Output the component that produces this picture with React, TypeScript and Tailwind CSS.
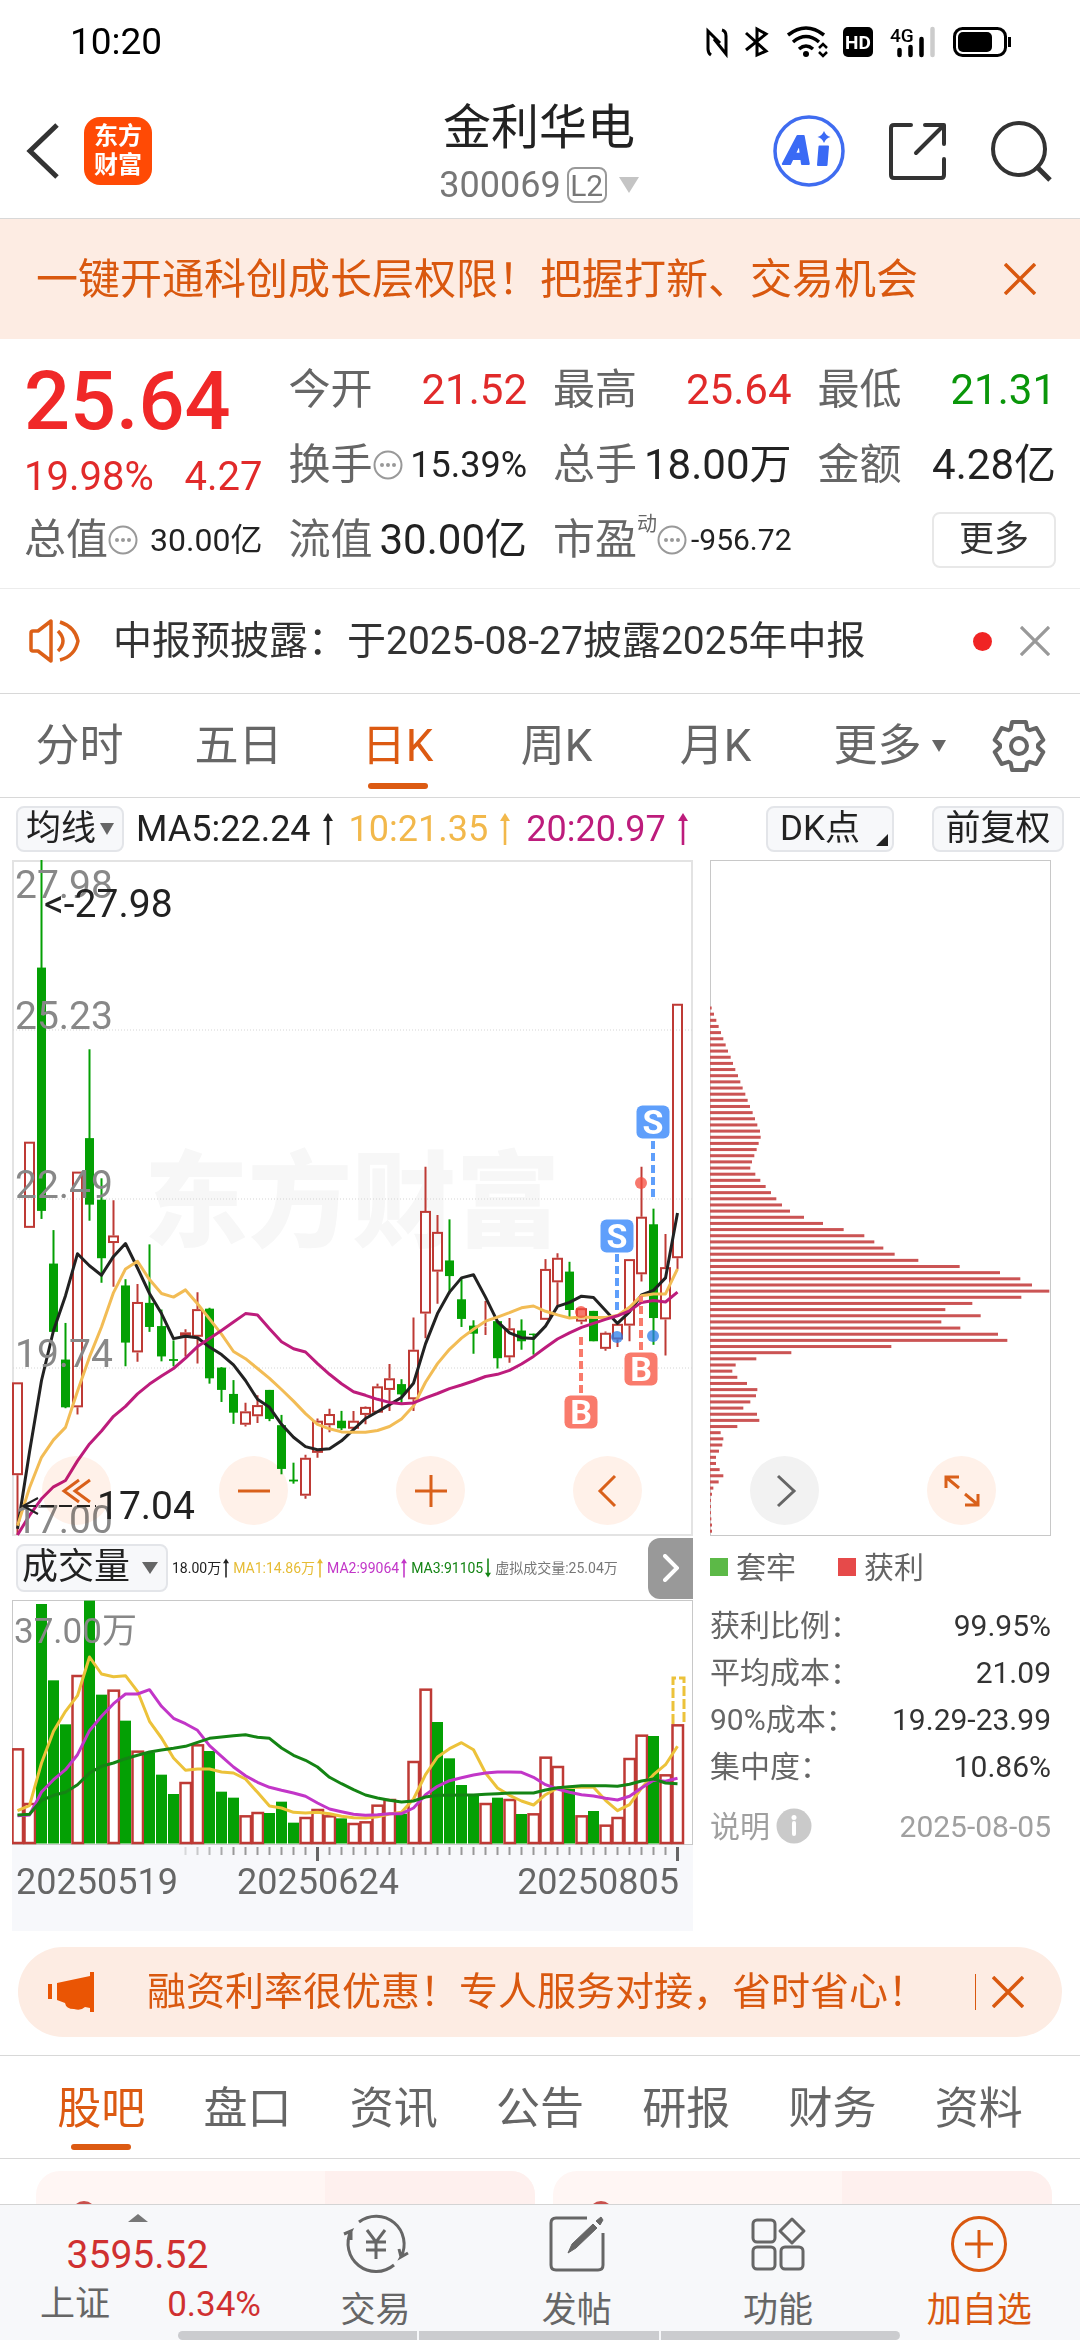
import React, { useState } from 'react';

interface Candle {
  up: boolean;
  // high, body top, body bottom, low (chart units, 0 = top)
  v: [number, number, number, number];
}

interface QuoteItem {
  label: string;
  value: string;
  tone?: 'up' | 'down';
  size?: 'sm' | 'md' | 'lg' | 'xs';
  more?: boolean;
  sup?: string;
}

const raw: [number, number, number, number, number][] = [
  [1, 1194, 1194, 1402, 1536], [1, 655, 655, 848, 848], [0, 24, 265, 810, 828], [0, 853, 928, 1081, 1081],
  [0, 1061, 1143, 1250, 1252], [1, 722, 722, 1250, 1266], [0, 448, 647, 796, 832], [0, 737, 785, 916, 971],
  [1, 786, 865, 882, 980], [0, 963, 977, 1105, 1158], [1, 974, 1014, 1127, 1148], [0, 885, 1016, 1070, 1081],
  [0, 1031, 1068, 1136, 1147], [0, 1100, 1142, 1146, 1158], [1, 1075, 1082, 1090, 1136], [1, 992, 1030, 1092, 1152],
  [0, 1027, 1029, 1185, 1197], [0, 1160, 1161, 1211, 1238], [0, 1189, 1220, 1262, 1287], [1, 1240, 1259, 1289, 1293],
  [1, 1223, 1245, 1270, 1285], [0, 1211, 1211, 1276, 1281], [0, 1267, 1290, 1388, 1400], [0, 1374, 1412, 1416, 1421],
  [1, 1356, 1363, 1448, 1455], [1, 1275, 1280, 1352, 1363], [1, 1253, 1265, 1290, 1306], [0, 1258, 1280, 1297, 1301],
  [1, 1258, 1280, 1298, 1301], [1, 1248, 1249, 1267, 1288], [1, 1197, 1203, 1262, 1262], [1, 1153, 1185, 1211, 1258],
  [0, 1187, 1198, 1221, 1240], [1, 1049, 1121, 1232, 1258], [1, 711, 810, 1040, 1095], [1, 819, 857, 946, 1018],
  [0, 829, 921, 956, 995], [0, 962, 1008, 1052, 1070], [0, 1055, 1067, 1085, 1130], [1, 1012, 1069, 1070, 1088],
  [0, 1055, 1057, 1140, 1163], [1, 1050, 1073, 1138, 1150], [0, 1053, 1078, 1102, 1121], [0, 1085, 1085, 1088, 1132],
  [1, 918, 940, 1054, 1054], [1, 905, 915, 970, 1025], [0, 924, 946, 1032, 1048], [1, 1028, 1028, 1058, 1064],
  [0, 1034, 1034, 1102, 1102], [1, 1080, 1083, 1119, 1123], [1, 1063, 1063, 1098, 1115], [1, 918, 918, 1067, 1102],
  [1, 711, 823, 952, 968], [0, 805, 840, 1050, 1110], [1, 862, 936, 1053, 1134], [1, 346, 346, 916, 940]
];

const candles: Candle[] = raw.map(([up, ...v]) => ({ up: up === 1, v }));

const ma5 = [
  1522, 1350, 1190, 1078, 1000, 906, 933, 954, 912, 883, 938, 995, 1040, 1096, 1091, 1094, 1115, 1132, 1155, 1190,
  1232, 1250, 1288, 1317, 1338, 1345, 1343, 1325, 1300, 1275, 1260, 1244, 1228, 1196, 1108, 1040, 992, 960, 953, 1003,
  1058, 1083, 1094, 1096, 1068, 1024, 1015, 1001, 1004, 1033, 1062, 1036, 998, 988, 960, 815
];
const ma10 = [
  1515, 1430, 1362, 1323, 1295, 1214, 1137, 1070, 993, 940, 923, 964, 995, 1003, 987, 1018, 1052, 1086, 1125, 1141,
  1163, 1185, 1210, 1236, 1264, 1288, 1298, 1305, 1306, 1306, 1302, 1293, 1276, 1247, 1194, 1152, 1120, 1095, 1075, 1057,
  1048, 1038, 1027, 1023, 1035, 1043, 1050, 1048, 1049, 1049, 1044, 1026, 1000, 996, 996, 940
];
const ma20 = [
  1536, 1492, 1455, 1428, 1414, 1370, 1332, 1303, 1270, 1248, 1220, 1198, 1180, 1163, 1140, 1114, 1096, 1078, 1059, 1040,
  1043, 1074, 1103, 1119, 1126, 1152, 1176, 1197, 1215, 1223, 1232, 1239, 1242, 1240, 1229, 1219, 1208, 1200, 1191, 1181,
  1176, 1167, 1153, 1136, 1116, 1097, 1083, 1071, 1062, 1053, 1045, 1034, 1015, 1011, 1014, 992
];

const volumes = [
  656, 820, 223, 452, 584, 436, 213, 495, 480, 573, 663, 668, 735, 793, 757, 644, 664, 786, 804, 857, 847, 850, 816, 879,
  862, 838, 857, 866, 880, 875, 825, 808, 852, 694, 477, 577, 686, 766, 795, 820, 804, 808, 853, 851, 681, 709, 778, 857,
  844, 885, 862, 685, 615, 619, 734, 584
];
const volMa1 = [
  843, 828, 700, 605, 545, 498, 382, 433, 441, 438, 485, 575, 625, 685, 722, 718, 718, 727, 730, 748, 788, 829, 835, 848,
  850, 848, 852, 860, 864, 865, 861, 853, 848, 808, 735, 682, 657, 639, 660, 730, 775, 797, 814, 826, 795, 775, 773, 772,
  773, 812, 843, 825, 775, 735, 705, 650
];
const volMa2 = [
  858, 856, 787, 750, 720, 675, 603, 560, 522, 493, 493, 480, 530, 566, 582, 602, 648, 680, 712, 738, 758, 773, 782, 790,
  800, 820, 838, 846, 854, 857, 855, 852, 852, 835, 795, 770, 753, 744, 736, 730, 727, 727, 728, 743, 765, 778, 788, 795,
  799, 806, 811, 800, 775, 752, 755, 746
];
const volMa3 = [
  856, 854, 812, 797, 788, 765, 730, 710, 700, 687, 677, 667, 661, 656, 650, 638, 626, 622, 618, 615, 623, 626, 655, 677,
  692, 712, 743, 762, 780, 796, 805, 812, 817, 814, 802, 797, 797, 796, 796, 794, 792, 790, 790, 790, 781, 774, 771, 768,
  768, 768, 770, 764, 754, 748, 760, 762
];

// chip distribution, length of each bar from the top price down
const chips = [
  5, 12, 19, 26, 33, 40, 47, 54, 62, 69, 76, 84, 91, 98, 106, 113, 120, 128, 135, 142, 150, 152, 146, 140, 133, 126, 121,
  136, 151, 167, 183, 199, 216, 240, 282, 339, 401, 463, 493, 520, 554, 625, 749, 870, 931, 966, 1018, 934, 787, 706, 812,
  694, 751, 864, 892, 544, 244, 139, 77, 67, 82, 111, 142, 138, 121, 100, 141, 148, 82, 32, 40, 37, 27, 18, 18, 29, 40, 26,
  10, 6, 3, 3, 3, 4, 6, 6
];

const RED = '#be3a35';
const GREEN = '#04a004';

const cx = (i: number) => 5.5 + i * 12;
const priceY = (v: number) => (v - 24) / 2.24;
const volY = (v: number) => (v - 211) / 3;
const line = (data: number[], toY: (v: number) => number) =>
  data.map((v, i) => `${cx(i)},${toY(v).toFixed(1)}`).join(' ');

const gearPoints = Array.from({ length: 6 }, (_, i) => i * 60 - 90)
  .flatMap((a) => [[a - 26, 19], [a - 16, 25], [a + 16, 25], [a + 26, 19]])
  .map(([a, r]) => {
    const t = (a * Math.PI) / 180;
    return `${(27 + r * Math.cos(t)).toFixed(1)},${(27 + r * Math.sin(t)).toFixed(1)}`;
  })
  .join(' ');

const CloseIcon = ({ className }: { className: string }) => (
  <svg className={className} viewBox="0 0 32 32" fill="none" stroke="currentColor" strokeWidth="3.500">
    <path d="M1 1L31 31M31 1L1 31" />
  </svg>
);

const Caret = ({ className }: { className: string }) => (
  <svg className={className} viewBox="0 0 14 12" preserveAspectRatio="none" fill="currentColor">
    <path d="M0 0H14L7 12Z" />
  </svg>
);

const Arrow = ({ className }: { className: string }) => (
  <svg className={className} viewBox="0 0 10 32" fill="currentColor">
    <path d="M5 0L10 8H6.300V32H3.700V8H0Z" />
  </svg>
);

const StatusBar: React.FC = () => (
  <div className="flex h-[84px] items-center justify-between pl-[70px] pr-[68px]">
    <span className="text-[37px] text-black">10:20</span>
    <svg className="h-[34px] w-[308px]" viewBox="704 25 308 34" fill="none" stroke="#000">
      <path d="M711 55Q708 53 708 49V31L720 43M714 39L726 54V36Q726 31 722 30" strokeWidth="3" />
      <path d="M746 33L766 51L757 55V29L766 34L746 50" strokeWidth="3" />
      <path d="M788 35Q806 21 824 35M793 42Q806 31 819 42M799 49Q806 43 813 49" strokeWidth="3.500" />
      <circle cx="806" cy="54" r="3" fill="#000" stroke="none" />
      <path d="M819 48L823 44L827 48M819 52L823 56L827 52" strokeWidth="2.500" />
      <rect x="843" y="27" width="30" height="30" rx="5" fill="#000" stroke="none" />
      <text x="858" y="49" textAnchor="middle" fontSize="19" fontWeight="700" fill="#fff" stroke="none">HD</text>
      <text x="890" y="42" fontSize="19" fontWeight="500" fill="#000" stroke="none">4G</text>
      <g strokeWidth="4.500" strokeLinecap="round">
        <path d="M899.500 50V55M910.500 47V55M921.500 39V55" />
        <path d="M932.500 29V55" stroke="#ccc" />
      </g>
      <rect x="954.500" y="28.500" width="51" height="27" rx="8" strokeWidth="3" />
      <rect x="958" y="32" width="34" height="20" rx="5" fill="#000" stroke="none" />
      <path d="M1009.500 37V47" strokeWidth="3" />
    </svg>
  </div>
);

const Header: React.FC = () => (
  <header className="flex h-[135px] items-center border-b border-[#d8d8d8] pl-[26px] pr-[28px]">
    <div className="flex flex-1 items-center gap-6">
      <button aria-label="返回">
        <svg className="h-[56px] w-[34px]" viewBox="0 0 34 56" fill="none" stroke="#333" strokeWidth="5">
          <path d="M31 2L4 28L31 54" />
        </svg>
      </button>
      <a href="#home" className="flex h-[68px] w-[68px] flex-col items-center justify-center rounded-2xl bg-[#ff4a05] text-2xl leading-[29px] font-bold text-white">
        <span>东方</span>
        <span>财富</span>
      </a>
    </div>
    <div className="flex flex-col items-center pt-2">
      <h1 className="text-[48px] leading-[60px] text-[#222]">金利华电</h1>
      <button className="flex h-[54px] items-center text-[36px] text-[#777]">
        300069
        <span className="ml-1.5 flex h-9 w-10 items-center justify-center rounded-lg border-2 border-[#999] text-[30px] text-[#777]">L2</span>
        <Caret className="ml-3 h-4 w-5 text-[#c4c4c4]" />
      </button>
    </div>
    <div className="flex flex-1 items-center justify-end gap-[42px]">
      <button aria-label="AI">
        <svg className="h-[74px] w-[74px]" viewBox="0 0 74 74">
          <circle cx="37" cy="37" r="34" fill="none" stroke="#3f6cf0" strokeWidth="3.500" />
          <text x="13" y="50" fontSize="39" fontWeight="900" fontStyle="italic" fill="#3a6af5" stroke="#3a6af5" strokeWidth="2" strokeLinejoin="round">A</text>
          <path d="M47.500 32.500H56L54.500 51H46Z" fill="#3a6af5" stroke="#3a6af5" strokeWidth="2" strokeLinejoin="round" />
          <path d="M52 17Q54 22 58.500 23Q54 24 52 29Q50 24 45.500 23Q50 22 52 17Z" fill="#3a6af5" />
        </svg>
      </button>
      <button aria-label="分享">
        <svg className="h-[60px] w-[60px]" viewBox="0 0 60 60" fill="none" stroke="#333" strokeWidth="4" strokeLinejoin="round" strokeLinecap="round">
          <path d="M23 4H6Q3 4 3 7V54Q3 57 6 57H53Q56 57 56 54V38" />
          <path d="M37 4H56V23M55 5L28 32" />
        </svg>
      </button>
      <button aria-label="搜索">
        <svg className="h-[62px] w-[62px]" viewBox="0 0 62 62" fill="none" stroke="#333" strokeWidth="4">
          <circle cx="29" cy="29" r="26" />
          <path d="M46 46L60 60" strokeWidth="5" />
        </svg>
      </button>
    </div>
  </header>
);

const quotes: QuoteItem[] = [
  { label: '今开', value: '21.52', tone: 'up' },
  { label: '最高', value: '25.64', tone: 'up' },
  { label: '最低', value: '21.31', tone: 'down' },
  { label: '换手', value: '15.39%', size: 'md', more: true },
  { label: '总手', value: '18.00万' },
  { label: '金额', value: '4.28亿' },
  { label: '总值', value: '30.00亿', size: 'sm', more: true },
  { label: '流值', value: '30.00亿' },
  { label: '市盈', value: '-956.72', size: 'xs', more: true, sup: '动' }
];

const sizes = { lg: 'text-[42px]', md: 'text-[36px]', sm: 'text-[32px]', xs: 'text-[30px]' };
const tones = { up: 'text-[#e12a2a]', down: 'text-[#0a960a]' };

const MoreDots = () => (
  <svg className="h-[30px] w-[30px]" viewBox="0 0 30 30" fill="#999">
    <circle cx="15" cy="15" r="13.500" fill="none" stroke="#999" strokeWidth="2" />
    <circle cx="9" cy="15" r="2" />
    <circle cx="15" cy="15" r="2" />
    <circle cx="21" cy="15" r="2" />
  </svg>
);

const Quote: React.FC = () => (
  <section className="grid auto-rows-[75px] grid-cols-4 gap-x-[26px] border-b border-[#ececec] px-6 pt-[13px] pb-[11px]">
    <div className="row-span-2 text-[#e12a2a]">
      <div className="text-[81px] leading-[100px] font-medium text-[#f02828]">25.64</div>
      <div className="flex justify-between text-[40px] leading-[50px]">
        <span>19.98%</span>
        <span>4.27</span>
      </div>
    </div>
    {quotes.map((q) => (
      <div key={q.label} className="flex items-center justify-between whitespace-nowrap">
        <span className="flex items-center text-[42px] text-[#666]">
          {q.label}
          {q.sup && <sup className="-top-4 self-center text-xl">{q.sup}</sup>}
          {q.more && <MoreDots />}
        </span>
        <span className={`${sizes[q.size ?? 'lg']} ${q.tone ? tones[q.tone] : 'text-[#222]'}`}>{q.value}</span>
      </div>
    ))}
    <div className="flex items-center justify-end">
      <button className="h-[56px] w-[124px] rounded-lg border-2 border-[#e8e8e8] text-[35px] text-[#333]">更多</button>
    </div>
  </section>
);

const Notice: React.FC = () => (
  <section className="flex h-[105px] items-center border-b border-[#d8d8d8] pl-[29px] pr-[30px]">
    <svg className="h-[44px] w-[52px]" viewBox="0 0 52 44" fill="none" stroke="#dc6018" strokeWidth="3.500" strokeLinejoin="round">
      <path d="M2 14Q2 12 4 12H9L22 2V42L9 32H4Q2 32 2 30Z" />
      <path d="M29 12Q39 22 29 32M31 3Q46 8 49 22Q46 37 31 41" />
    </svg>
    <a href="#notice" className="ml-8 flex-1 text-[39px] text-[#333]">中报预披露：于2025-08-27披露2025年中报</a>
    <span className="h-[19px] w-[19px] rounded-full bg-[#f02424]" />
    <button aria-label="关闭公告" className="ml-7">
      <CloseIcon className="h-[30px] w-[30px] text-[#999]" />
    </button>
  </section>
);

const PeriodTabs: React.FC = () => {
  const [active, setActive] = useState('日K');

  return (
    <nav className="flex h-[104px] items-center border-b border-[#d8d8d8] pr-[34px]">
      {['分时', '五日', '日K', '周K', '月K'].map((t) => (
        <button
          key={t}
          onClick={() => setActive(t)}
          className={`relative h-full w-[159px] text-[44px] ${active === t ? 'text-[#dc5a12]' : 'text-[#666]'}`}
        >
          {t}
          {active === t && <span className="absolute bottom-2 left-1/2 h-1.5 w-[60px] -translate-x-1/2 rounded-full bg-[#dc5a12]" />}
        </button>
      ))}
      <button className="flex flex-1 items-center justify-center gap-2.5 pr-2 text-[44px] text-[#666]">
        更多
        <Caret className="h-3 w-3.5" />
      </button>
      <button aria-label="设置">
        <svg className="h-[54px] w-[54px]" viewBox="0 0 54 54" fill="none" stroke="#666" strokeWidth="4" strokeLinejoin="round">
          <polygon points={gearPoints} />
          <circle cx="27" cy="27" r="8" />
        </svg>
      </button>
    </nav>
  );
};

const Toolbar: React.FC = () => (
  <div className="flex h-[62px] items-center px-4 text-[35px] text-[#222]">
    <button className="flex h-[46px] w-[108px] items-center justify-center gap-1 rounded-lg border-2 border-[#e3e5e9] bg-[#f7f8fa]">
      均线
      <Caret className="h-3 w-3.5 text-[#666]" />
    </button>
    <span className="ml-3 text-[36px]">MA5:22.24</span>
    <Arrow className="ml-3 h-8 w-2.5" />
    <span className="ml-4 text-[36px] text-[#f2b84b]">10:21.35</span>
    <Arrow className="ml-3 h-8 w-2.5 text-[#f2b84b]" />
    <span className="ml-4 text-[36px] text-[#bd1c7c]">20:20.97</span>
    <Arrow className="ml-3 h-8 w-2.5 text-[#bd1c7c]" />
    <button className="relative ml-auto flex h-[46px] w-[128px] items-center rounded-lg border-2 border-[#e3e5e9] bg-[#f7f8fa] pl-3">
      DK点
      <svg className="absolute right-1 bottom-1 h-3 w-3" viewBox="0 0 12 12" fill="#222">
        <path d="M12 0V12H0Z" />
      </svg>
    </button>
    <button className="ml-[38px] flex h-[46px] w-[132px] items-center justify-center rounded-lg border-2 border-[#e3e5e9] bg-[#f7f8fa]">前复权</button>
  </div>
);

const signals = [
  { x: 641, y: 262, s: 'S', from: 281, to: 337, dot: 476 },
  { x: 605, y: 376, s: 'S', from: 394, to: 451, dot: 477 },
  { x: 629, y: 509, s: 'B', from: 490, to: 436, dot: 323 },
  { x: 569, y: 552, s: 'B', from: 533, to: 477, dot: 452 }
];

const CandleChart: React.FC = () => (
  <svg className="block h-auto w-full" viewBox="0 0 681 676" fill="none">
    <text x="340" y="379" textAnchor="middle" fontSize="104" fontWeight="900" fill="#f7f7f7">东方财富</text>
    <rect x="1" y="1" width="679" height="674" stroke="#e3e3e3" strokeWidth="2" />
    {[170, 339, 508].map((y) => (
      <path key={y} d={`M1 ${y}H680`} stroke="#d5d5d5" strokeDasharray="1 2" />
    ))}
    {candles.map(({ up, v }, i) => {
      const [h, t, b, l] = v.map(priceY);
      return up ? (
        <g key={i} stroke={RED} strokeWidth="2">
          <path d={`M${cx(i)} ${h}V${t}M${cx(i)} ${b}V${l}`} />
          <rect x={cx(i) - 4.5} y={t + 1} width="9" height={Math.max(b - t - 2, 0)} />
        </g>
      ) : (
        <g key={i} fill={GREEN}>
          <rect x={cx(i) - 1} y={h} width="2" height={l - h} />
          <rect x={cx(i) - 4.5} y={t} width="9" height={b - t} />
        </g>
      );
    })}
    <g strokeWidth="3" strokeLinejoin="round">
      <polyline points={line(ma5, priceY)} stroke="#222" />
      <polyline points={line(ma10, priceY)} stroke="#f2bc55" />
      <polyline points={line(ma20, priceY)} stroke="#bd1c7c" />
    </g>
    {signals.map((m) => {
      const color = m.s === 'S' ? '#5f9ffb' : '#f97b6c';
      return (
        <g key={m.x}>
          <path d={`M${m.x} ${m.from}V${m.to}`} stroke={color} strokeWidth="4" strokeDasharray="8 4" />
          <circle cx={m.x} cy={m.dot} r="6" fill={m.s === 'S' ? '#2b7de9' : '#f44b3c'} opacity="0.750" />
          <rect x={m.x - 16.5} y={m.y - 16.5} width="33" height="33" rx="6" fill={color} />
          <text x={m.x} y={m.y + 12} textAnchor="middle" fontSize="34" fontWeight="700" fill="#fff">{m.s}</text>
        </g>
      );
    })}
    <g fontSize="39" fill="#888">
      <text x="3" y="38">27.98</text>
      <text x="3" y="169">25.23</text>
      <text x="3" y="338">22.49</text>
      <text x="3" y="507">19.74</text>
      <text x="3" y="673">17.00</text>
    </g>
    <g fontSize="39" fill="#222">
      <text x="32" y="57">&lt;-27.98</text>
      <text x="85" y="659">17.04</text>
    </g>
    <path d="M26 638L11 646L26 654" stroke="#222" strokeWidth="2" />
    <path d="M11 646H84" stroke="#222" strokeWidth="2" strokeDasharray="13 5" />
  </svg>
);

const ChipChart: React.FC = () => (
  <svg className="block h-auto w-full" viewBox="0 0 341 676" fill="none">
    <rect x="0.500" y="0.500" width="340" height="675" stroke="#c8c8c8" />
    {chips.map((len, i) => (
      <rect key={i} x="0" y={146.500 + i * 6.155} width={len / 3} height="3" fill="#cb5454" />
    ))}
  </svg>
);

const VolumeChart: React.FC = () => (
  <svg className="block h-auto w-full" viewBox="0 0 681 331" fill="none">
    <rect x="0" y="245" width="681" height="86" fill="#f7f8fb" />
    <rect x="0.500" y="0.500" width="680" height="244" stroke="#c8c8c8" />
    {volumes.map((v, i) => {
      // these two sessions closed on the other side of the previous close
      const up = i === 35 ? false : i === 43 ? true : candles[i].up;
      const y = volY(v);
      return up ? (
        <rect key={i} x={cx(i) - 5} y={y + 1} width="10.500" height={242 - y} stroke={RED} strokeWidth="2.500" />
      ) : (
        <rect key={i} x={cx(i) - 5.5} y={y} width="11" height={243.500 - y} fill={GREEN} />
      );
    })}
    <path d="M661 124V78H672V124" stroke="#ecc23a" strokeWidth="3" strokeDasharray="10 3" />
    <g strokeWidth="3" strokeLinejoin="round">
      <polyline points={line(volMa1, volY)} stroke="#ecc23a" />
      <polyline points={line(volMa2, volY)} stroke="#c236c8" />
      <polyline points={line(volMa3, volY)} stroke="#148414" />
    </g>
    <text x="2" y="43" fontSize="35" fill="#888">37.00万</text>
    {candles.map((_, i) => {
      if (i < 14) return null;
      const major = i === 25 || i === 55;
      return (
        <path
          key={i}
          d={`M${cx(i)} 247V${major ? 261 : 255}`}
          stroke={major ? '#666' : '#999'}
          strokeWidth={major ? 3 : 2}
          opacity={i < 18 ? (i - 12) / 6 : 1}
        />
      );
    })}
    <g fontSize="36" fill="#666">
      <text x="4" y="294">20250519</text>
      <text x="306" y="294" textAnchor="middle">20250624</text>
      <text x="667" y="294" textAnchor="end">20250805</text>
    </g>
  </svg>
);

const round = 'flex h-[69px] w-[69px] items-center justify-center rounded-full mix-blend-multiply';

const ChartControls: React.FC = () => (
  <div className="absolute right-[55px] bottom-[11px] left-[30px] flex justify-between text-[#d9601a]">
    {[
      { name: '最早', d: 'M24 11L9 22L24 33M35 11L20 22L35 33' },
      { name: '缩小', d: 'M6 22H38' },
      { name: '放大', d: 'M6 22H38M22 6V38' },
      { name: '向前', d: 'M29 7L14 22L29 37' },
      { name: '向后', d: 'M15 7L31 22L15 37' },
      { name: '全屏', d: 'M6 19V8H19M7 9L19 19M38 25V36H25M37 35L25 25' }
    ].map((b) => (
      <button key={b.name} aria-label={b.name} className={`${round} ${b.name === '向后' ? 'bg-[#f2f2f2] text-[#666]' : 'bg-[#fff1e9]'}`}>
        <svg className="h-11 w-11" viewBox="0 0 44 44" fill="none" stroke="currentColor" strokeWidth="3">
          <path d={b.d} />
        </svg>
      </button>
    ))}
  </div>
);

const VolumeHeader: React.FC = () => (
  <div className="flex h-16 items-center pl-1 text-sm whitespace-nowrap">
    <button className="flex h-[48px] w-[152px] items-center justify-between rounded-lg border-2 border-[#e3e5e9] bg-[#f7f8fa] pr-2 pl-1 text-[36px] text-[#222]">
      成交量
      <Caret className="h-3 w-4 text-[#666]" />
    </button>
    <span className="ml-1 text-[#222]">18.00万</span>
    <Arrow className="ml-0.5 h-5 w-1.5 text-[#222]" />
    <span className="ml-1 text-[#e6bc35]">MA1:14.86万</span>
    <Arrow className="ml-0.5 h-5 w-1.5 text-[#e6bc35]" />
    <span className="ml-1 text-[#c236c8]">MA2:99064</span>
    <Arrow className="ml-0.5 h-5 w-1.5 text-[#c236c8]" />
    <span className="ml-1 text-[#148414]">MA3:91105</span>
    <Arrow className="ml-0.5 h-5 w-1.5 rotate-180 text-[#148414]" />
    <span className="ml-1 text-[#777]">虚拟成交量:25.04万</span>
    <button aria-label="展开" className="ml-auto flex h-[61px] w-[45px] items-center justify-center rounded-l-xl bg-[#999]">
      <svg className="h-7 w-4" viewBox="0 0 16 28" fill="none" stroke="#fff" strokeWidth="4" strokeLinecap="round">
        <path d="M2 2L14 14L2 26" />
      </svg>
    </button>
  </div>
);

const stats = [
  ['获利比例：', '99.95%'],
  ['平均成本：', '21.09'],
  ['90%成本：', '19.29-23.99'],
  ['集中度：', '10.86%']
];

const ChipStats: React.FC = () => (
  <div className="text-[30px] text-[#666]">
    <div className="flex h-[62px] items-center">
      <span className="mr-2 h-[18px] w-[18px] bg-[#5cb947]" />
      套牢
      <span className="mr-2 ml-[42px] h-[18px] w-[18px] bg-[#e64a4a]" />
      获利
    </div>
    <dl className="pt-1">
      {stats.map(([k, v]) => (
        <div key={k} className="flex h-[47px] items-center justify-between">
          <dt>{k}</dt>
          <dd className="text-[#333]">{v}</dd>
        </div>
      ))}
    </dl>
    <div className="flex h-[72px] items-center justify-between text-[#a0a0a0]">
      <button className="flex items-center gap-1.5">
        说明
        <svg className="h-9 w-9" viewBox="0 0 36 36">
          <circle cx="18" cy="18" r="17.500" fill="#cacaca" />
          <path d="M18 15V26" stroke="#fff" strokeWidth="4" strokeLinecap="round" />
          <circle cx="18" cy="9.500" r="2.500" fill="#fff" />
        </svg>
      </button>
      <span>2025-08-05</span>
    </div>
  </div>
);

const Promo: React.FC = () => (
  <section className="mx-[18px] mt-4 flex h-[90px] items-center rounded-full bg-[#fdece3] pr-[38px] pl-[30px] text-[#d9580f]">
    <svg className="h-[40px] w-[46px]" viewBox="0 0 46 40" fill="#ea5504">
      <path d="M0 12H4V27H0ZM9 11L42 4V0H46V40H42V36L37 35Q33 39 26 37Q18 37 17 31L9 28Z" />
    </svg>
    <a href="#promo" className="ml-[53px] flex-1 text-[39px]">融资利率很优惠！专人服务对接，省时省心！</a>
    <span className="mr-4 h-9 w-px bg-[#d9580f]" />
    <button aria-label="关闭">
      <CloseIcon className="h-8 w-8" />
    </button>
  </section>
);

const InfoTabs: React.FC = () => {
  const [active, setActive] = useState('股吧');

  return (
    <nav className="mt-[18px] flex h-[104px] border-y border-[#d8d8d8] px-7">
      {['股吧', '盘口', '资讯', '公告', '研报', '财务', '资料'].map((t) => (
        <button
          key={t}
          onClick={() => setActive(t)}
          className={`relative flex-1 pt-1 text-[44px] ${active === t ? 'text-[#dc5a12]' : 'text-[#666]'}`}
        >
          {t}
          {active === t && <span className="absolute bottom-2 left-1/2 h-1.5 w-[60px] -translate-x-1/2 rounded-full bg-[#dc5a12]" />}
        </button>
      ))}
    </nav>
  );
};

const BottomNav: React.FC = () => (
  <nav className="sticky bottom-0 flex h-[136px] border-t border-[#d4d4d4] bg-[#f7f8fa] text-[35px] text-[#666]">
    <a href="#index" className="flex w-[275px] flex-col items-center pt-[9px]">
      <Caret className="h-2 w-5 rotate-180 text-[#777]" />
      <span className="mt-2 text-[39px] leading-[50px] text-[#d03030]">3595.52</span>
      <span className="flex w-full justify-between pr-[14px] pl-10 pt-0.5 leading-[46px]">
        上证
        <span className="text-[#d03030]">0.34%</span>
      </span>
    </a>
    <button className="flex flex-1 flex-col items-center pt-[9px]">
      <svg className="h-[60px] w-[66px]" viewBox="0 0 66 60" fill="none" stroke="#666" strokeWidth="3">
        <path d="M16 8A28 28 0 0 1 58 43L65 39M51 51A28 28 0 0 1 8 17L1 20M8 17V26M58 43L56 35" />
        <path d="M24 16L33 28L42 16M23 28H43M23 36H43M33 28V45" />
      </svg>
      <span className="pt-3.5 leading-[46px]">交易</span>
    </button>
    <button className="flex flex-1 flex-col items-center pt-[9px]">
      <svg className="h-[60px] w-[60px]" viewBox="0 0 60 60" fill="none" stroke="#666" strokeWidth="3">
        <path d="M40 4H9Q4 4 4 9V51Q4 56 9 56H51Q56 56 56 51V19" />
        <path d="M21 39L25 30L46 10L50 14L29 34ZM49 7L54 3L56 6L53 11Z" fill="#666" strokeWidth="1" />
      </svg>
      <span className="pt-3.5 leading-[46px]">发帖</span>
    </button>
    <button className="flex flex-1 flex-col items-center pt-[9px]">
      <svg className="h-[60px] w-[60px]" viewBox="0 0 60 60" fill="none" stroke="#666" strokeWidth="3" strokeLinejoin="round">
        <rect x="5" y="6" width="22" height="22" rx="4" />
        <rect x="5" y="33" width="22" height="22" rx="4" />
        <rect x="33" y="33" width="22" height="22" rx="4" />
        <path d="M44 5L56 17L44 29L32 17Z" />
      </svg>
      <span className="pt-3.5 leading-[46px]">功能</span>
    </button>
    <button className="flex flex-1 flex-col items-center pt-[9px] text-[#d9580f]">
      <svg className="h-[60px] w-[60px]" viewBox="0 0 60 60" fill="none" stroke="currentColor" strokeWidth="3">
        <circle cx="30" cy="30" r="26.500" />
        <path d="M16 30H44M30 16V44" />
      </svg>
      <span className="pt-3.5 leading-[46px]">加自选</span>
    </button>
    <div className="absolute right-[180px] bottom-0 left-[178px] flex h-[9px] gap-0.5 overflow-hidden rounded-full">
      <span className="flex-1 bg-[#cbcccf]" />
      <span className="flex-1 bg-[#cbcccf]" />
      <span className="flex-1 bg-[#cbcccf]" />
    </div>
  </nav>
);

export default function App() {
  return (
    <div className="min-h-screen bg-white font-['Roboto','Noto_Sans_CJK_SC',sans-serif]">
      <StatusBar />
      <Header />
      <section className="flex h-[120px] items-center justify-between bg-[#fdece3] pr-[44px] pl-9 text-[#d9580f]">
        <a href="#open" className="text-[42px]">一键开通科创成长层权限！把握打新、交易机会</a>
        <button aria-label="关闭提示">
          <CloseIcon className="h-8 w-8" />
        </button>
      </section>
      <Quote />
      <Notice />
      <PeriodTabs />
      <Toolbar />
      <main className="pr-[29px] pl-3">
        <div className="relative grid grid-cols-[681fr_341fr] gap-x-[17px]">
          <CandleChart />
          <ChipChart />
          <ChartControls />
        </div>
        <div className="grid grid-cols-[681fr_341fr] gap-x-[17px]">
          <div>
            <VolumeHeader />
            <VolumeChart />
          </div>
          <ChipStats />
        </div>
      </main>
      <Promo />
      <InfoTabs />
      {/* topic cards, only their top edge shows above the bottom nav */}
      <section className="grid h-[45px] grid-cols-2 gap-x-[18px] overflow-hidden pr-[28px] pl-9 pt-3">
        {[0, 1].map((n) => (
          <div key={n} className="flex h-40 overflow-hidden rounded-3xl bg-[#fff6f4]">
            <span className="mt-[30px] ml-9 h-6 w-6 rounded-full bg-[#c8504c]" />
            <span className="ml-auto h-full w-[42%] bg-[#fef0ee]" />
          </div>
        ))}
      </section>
      <BottomNav />
    </div>
  );
}
